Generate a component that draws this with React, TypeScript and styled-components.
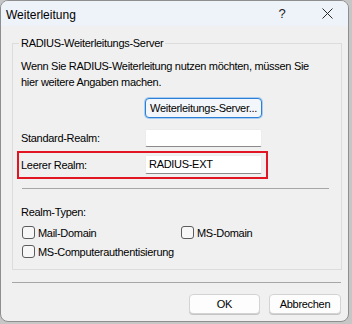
import React from "react";
import styled, { createGlobalStyle } from "styled-components";

const GlobalStyle = createGlobalStyle`
  html, body { margin: 0; padding: 0; }
  body {
    background: #c6c6c6;
    font-family: "Liberation Sans", Arial, sans-serif;
    width: 352px;
    height: 324px;
    overflow: hidden;
  }
`;

const Window = styled.div`
  box-sizing: border-box;
  width: 349px;
  height: 322px;
  border: 1px solid #8e8e8e;
  border-radius: 8px;
  overflow: hidden;
  background: #f0f0f0;
  display: flex;
  flex-direction: column;
`;

const TitleBar = styled.div`
  height: 25px;
  background: #eef2f9;
  display: flex;
  align-items: center;
  padding-left: 5px;
`;

const Title = styled.div`
  flex: 1;
  font-size: 12px;
  color: #000;
  line-height: 14px;
  margin-top: 2px;
`;

const CaptionButton = styled.div<{ $w: number; $pl?: number }>`
  width: ${(p) => p.$w}px;
  height: 25px;
  display: flex;
  align-items: center;
  justify-content: center;
  padding-left: ${(p) => p.$pl ?? 0}px;
  box-sizing: border-box;
  font-size: 13px;
  color: #222;
`;

const Body = styled.div`
  flex: 1;
  padding: 10px 6px 0 11px;
  display: flex;
  flex-direction: column;
`;

const Group = styled.fieldset`
  margin: 0;
  padding: 0 12px 8px 8px;
  border: 1px solid #dcdcdc;
  display: flex;
  flex-direction: column;
`;

const Legend = styled.legend`
  font-size: 11px;
  letter-spacing: -0.3px;
  line-height: 14px;
  padding: 0 2px;
  margin-left: -2px;
  color: #000;
`;

const Text = styled.div`
  font-size: 11px;
  letter-spacing: -0.3px;
  color: #000;
  line-height: 16px;
`;

const Description = styled(Text)`
  margin-top: 8px;
`;

const FieldRow = styled.div<{ $mt: number }>`
  display: grid;
  grid-template-columns: 124px 117px;
  align-items: center;
  margin-top: ${(p) => p.$mt}px;
`;

const Highlight = styled.div`
  display: grid;
  grid-template-columns: 124px 117px;
  align-items: center;
  width: fit-content;
  margin: 4px 0 0 -4px;
  padding: 2px 4px 3px 2px;
  border: 2px solid #e21522;
`;

const Label = styled(Text)`
  line-height: 14px;
`;

const PushButton = styled.button<{ $focused?: boolean; $w?: number }>`
  box-sizing: border-box;
  height: 20px;
  width: ${(p) => (p.$w ? `${p.$w}px` : "100%")};
  font-family: "Liberation Sans", Arial, sans-serif;
  font-size: 11px;
  letter-spacing: -0.3px;
  color: #000;
  padding: 0;
  border-radius: 4px;
  background: ${(p) => (p.$focused ? "#f3f6fa" : "#fdfdfd")};
  border: 1px solid ${(p) => (p.$focused ? "#2c7fd4" : "#d3d3d3")};
  box-shadow: ${(p) => (p.$focused ? "0 0 0 1px #a9cdf0" : "0 1px 0 #c4c4c4")};
`;

const Input = styled.div<{ $h: number }>`
  box-sizing: border-box;
  height: ${(p) => p.$h}px;
  background: #ffffff;
  border: 1px solid #ececec;
  border-bottom: 1px solid #8a8a8a;
  border-radius: 2px;
  font-size: 11px;
  letter-spacing: -0.3px;
  line-height: ${(p) => p.$h - 2}px;
  padding-left: 3px;
  color: #000;
`;

const Rule = styled.div<{ $mt: number; $ml?: number; $mr?: number }>`
  height: 1px;
  background: #a6a6a6;
  margin: ${(p) => p.$mt}px ${(p) => p.$mr ?? 0}px 0 ${(p) => p.$ml ?? 0}px;
`;

const SectionLabel = styled(Label)`
  margin-top: 16px;
`;

const Checks = styled.div`
  display: grid;
  grid-template-columns: 159px auto;
  grid-auto-rows: 19px;
  margin: 4px 0 0 1px;
`;

const CheckItem = styled.label`
  display: flex;
  align-items: center;
  gap: 3px;
  font-size: 11px;
  letter-spacing: -0.3px;
  color: #000;
  white-space: nowrap;
`;

const Box = styled.span`
  box-sizing: border-box;
  width: 13px;
  height: 13px;
  border: 1px solid #5c5c5c;
  border-radius: 3px;
  background: #f7f7f7;
  flex: none;
`;

const ButtonBar = styled.div`
  display: flex;
  justify-content: flex-end;
  gap: 9px;
  margin-top: 11px;
  padding-right: 1px;
`;

const Check = ({ label }: { label: string }) => (
  <CheckItem>
    <Box />
    {label}
  </CheckItem>
);

export default function App() {
  return (
    <>
      <GlobalStyle />
      <Window>
        <TitleBar>
          <Title>Weiterleitung</Title>
          <CaptionButton $w={46}>?</CaptionButton>
          <CaptionButton $w={43} $pl={2}>
            <svg width="11" height="11" viewBox="0 0 11 11">
              <path d="M0.5 0.5 L10.5 10.5 M10.5 0.5 L0.5 10.5" stroke="#2a2a2a" strokeWidth="1" fill="none" />
            </svg>
          </CaptionButton>
        </TitleBar>
        <Body>
          <Group>
            <Legend>RADIUS-Weiterleitungs-Server</Legend>
            <Description>
              Wenn Sie RADIUS-Weiterleitung nutzen möchten, müssen Sie
              <br />
              hier weitere Angaben machen.
            </Description>
            <FieldRow $mt={8}>
              <span />
              <PushButton $focused>Weiterleitungs-Server...</PushButton>
            </FieldRow>
            <FieldRow $mt={11}>
              <Label>Standard-Realm:</Label>
              <Input $h={18} />
            </FieldRow>
            <Highlight>
              <Label>Leerer Realm:</Label>
              <Input $h={19}>RADIUS-EXT</Input>
            </Highlight>
            <Rule $mt={9} $ml={1} />
            <SectionLabel>Realm-Typen:</SectionLabel>
            <Checks>
              <Check label="Mail-Domain" />
              <Check label="MS-Domain" />
              <Check label="MS-Computerauthentisierung" />
            </Checks>
          </Group>
          <Rule $mt={12} $mr={1} />
          <ButtonBar>
            <PushButton $w={71}>OK</PushButton>
            <PushButton $w={72}>Abbrechen</PushButton>
          </ButtonBar>
        </Body>
      </Window>
    </>
  );
}
